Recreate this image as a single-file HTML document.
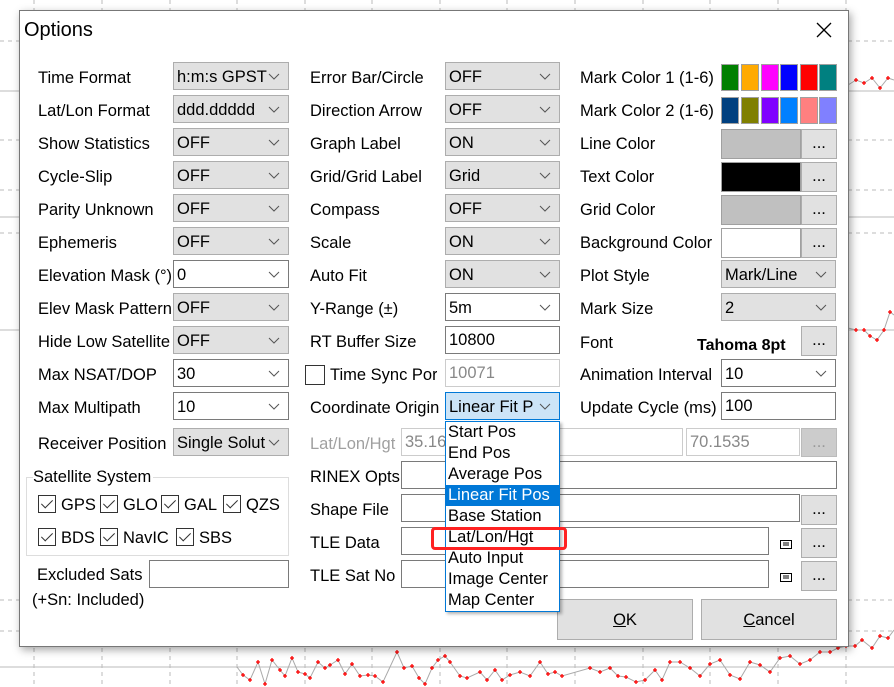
<!DOCTYPE html>
<html><head><meta charset="utf-8"><style>
*{box-sizing:border-box;margin:0;padding:0}
body{width:894px;height:687px;overflow:hidden;background:#fff;font-family:"Liberation Sans",sans-serif;font-size:16.5px;color:#000;position:relative}
.a{position:absolute}
.bg{z-index:0}
.dlg{position:absolute;z-index:1;left:19px;top:10px;width:830px;height:637px;background:#fff;border:1px solid #777;box-shadow:2px 3px 8px rgba(0,0,0,.35)}
#c{z-index:2}
.l{position:absolute;white-space:nowrap;line-height:20px}
.cb{position:absolute;height:28px;border:1px solid #adadad;background:#e1e1e1;padding-left:3px;line-height:28px;white-space:nowrap;overflow:hidden}
.cb.w{background:#fff;border-color:#7a7a7a}
.cb .ar{position:absolute;right:8px;top:10px;width:12px;height:7px}
.ed{position:absolute;height:28px;border:1px solid #7a7a7a;background:#fff;padding-left:3px;line-height:26px;white-space:nowrap;overflow:hidden}
.btn{position:absolute;border:1px solid #adadad;background:#e1e1e1;text-align:center;line-height:26px}
.sw{position:absolute;top:0;width:18px;height:27px;border:1px solid #a0a0a0}
.chk{display:inline-block;width:18px;height:18px;border:1px solid #333;vertical-align:-3px;margin-right:5px;position:relative}
.chk:after{content:"";position:absolute;left:5px;top:1px;width:5px;height:10px;border-right:1.3px solid #333;border-bottom:1.3px solid #333;transform:rotate(45deg)}
.chk.n:after{display:none}
.dd{position:absolute;left:445px;top:421px;width:115px;height:191px;border:1px solid #0078d7;background:#fff;box-shadow:2px 2px 3px rgba(0,0,0,.3)}
.dd div{height:21px;line-height:21px;padding-left:2px}
</style></head><body>
<svg class="a bg" style="left:0;top:0" width="894" height="687">
<defs><marker id="m" viewBox="0 0 4 4" refX="2" refY="2" markerWidth="4" markerHeight="4" markerUnits="userSpaceOnUse"><path d="M0 2H4M2 0V4" stroke="red" stroke-width="1.3"/></marker></defs>
<g stroke="#bbb" stroke-dasharray="4,4" stroke-width="1">
<line x1="0" y1="41" x2="894" y2="41"/><line x1="0" y1="140" x2="894" y2="140"/><line x1="0" y1="190" x2="894" y2="190"/><line x1="0" y1="233" x2="894" y2="233"/>
<line x1="0" y1="600" x2="894" y2="600"/><line x1="0" y1="631" x2="894" y2="631"/>
<line x1="34" y1="0" x2="34" y2="687"/><line x1="102" y1="0" x2="102" y2="687"/><line x1="170" y1="0" x2="170" y2="687"/><line x1="237" y1="0" x2="237" y2="687"/><line x1="305" y1="0" x2="305" y2="687"/><line x1="372" y1="0" x2="372" y2="687"/><line x1="440" y1="0" x2="440" y2="687"/><line x1="507" y1="0" x2="507" y2="687"/><line x1="575" y1="0" x2="575" y2="687"/><line x1="643" y1="0" x2="643" y2="687"/><line x1="710" y1="0" x2="710" y2="687"/><line x1="778" y1="0" x2="778" y2="687"/><line x1="846" y1="0" x2="846" y2="687"/>
</g>
<g stroke="#bbb"><line x1="0" y1="91" x2="894" y2="91"/><line x1="0" y1="217" x2="894" y2="217"/><line x1="0" y1="330" x2="894" y2="330"/><line x1="0" y1="667" x2="894" y2="667"/></g>
<polyline fill="none" stroke="#aaa" marker-mid="url(#m)" points="237,667 243,675 250,680 258,662 265,684 272,660 280,670 285,676 292,658 298,672 305,674 310,678 318,662 325,668 330,665 338,660 345,674 352,664 360,676 368,675 375,676 383,682 397,652 404,668 412,666 419,678 425,684 432,668 438,660 445,656 450,662 460,676 467,678 480,672 487,680 495,670 502,680 510,675 520,672 530,676 540,662 548,674 555,672 562,676 590,668 600,672 610,668 618,676 626,677 636,682 645,680 655,670 662,680 670,662 680,662 690,668 700,676 710,664 720,660 730,675 740,679 750,662 760,665 770,672 780,658 790,656 800,664 810,660 820,652 830,652 838,648 846,646 855,646 862,640 872,648 880,636 888,638 894,630"/>
<polyline fill="none" stroke="#aaa" marker-mid="url(#m)" points="848,85 856,80 864,83 872,78 880,88 888,78 894,80"/>
<polyline fill="none" stroke="#aaa" marker-mid="url(#m)" points="848,328 856,330 864,330 870,336 877,340 884,330 890,312 894,315"/>
</svg>
<div class="dlg">
<div class="l" style="left:4px;top:8px;font-size:20px;line-height:22px">Options</div>
<svg class="a" style="left:796px;top:11px" width="16" height="16"><path d="M1 1L15 15M15 1L1 15" stroke="#000" stroke-width="1.3"/></svg>
</div>
<div id="c" class="a" style="left:0;top:0;width:894px;height:687px">
<div class="l" style="left:38px;top:68px">Time Format</div>
<div class="l" style="left:38px;top:101px">Lat/Lon Format</div>
<div class="l" style="left:38px;top:134px">Show Statistics</div>
<div class="l" style="left:38px;top:167px">Cycle-Slip</div>
<div class="l" style="left:38px;top:200px">Parity Unknown</div>
<div class="l" style="left:38px;top:233px">Ephemeris</div>
<div class="l" style="left:38px;top:266px">Elevation Mask (°)</div>
<div class="l" style="left:38px;top:299px;width:135px;overflow:hidden">Elev Mask Pattern</div>
<div class="l" style="left:38px;top:332px;width:135px;overflow:hidden">Hide Low Satellite</div>
<div class="l" style="left:38px;top:365px">Max NSAT/DOP</div>
<div class="l" style="left:38px;top:398px">Max Multipath</div>
<div class="l" style="left:38px;top:434px">Receiver Position</div>

<div class="cb" style="left:173px;top:62px;width:116px">h:m:s GPST<svg class="ar" viewBox="0 0 12 7"><path d="M1 1L6 6L11 1" fill="none" stroke="#555"/></svg></div>
<div class="cb" style="left:173px;top:95px;width:116px">ddd.ddddd<svg class="ar" viewBox="0 0 12 7"><path d="M1 1L6 6L11 1" fill="none" stroke="#555"/></svg></div>
<div class="cb" style="left:173px;top:128px;width:116px">OFF<svg class="ar" viewBox="0 0 12 7"><path d="M1 1L6 6L11 1" fill="none" stroke="#555"/></svg></div>
<div class="cb" style="left:173px;top:161px;width:116px">OFF<svg class="ar" viewBox="0 0 12 7"><path d="M1 1L6 6L11 1" fill="none" stroke="#555"/></svg></div>
<div class="cb" style="left:173px;top:194px;width:116px">OFF<svg class="ar" viewBox="0 0 12 7"><path d="M1 1L6 6L11 1" fill="none" stroke="#555"/></svg></div>
<div class="cb" style="left:173px;top:227px;width:116px">OFF<svg class="ar" viewBox="0 0 12 7"><path d="M1 1L6 6L11 1" fill="none" stroke="#555"/></svg></div>
<div class="cb w" style="left:173px;top:260px;width:116px">0<svg class="ar" viewBox="0 0 12 7"><path d="M1 1L6 6L11 1" fill="none" stroke="#555"/></svg></div>
<div class="cb" style="left:173px;top:293px;width:116px">OFF<svg class="ar" viewBox="0 0 12 7"><path d="M1 1L6 6L11 1" fill="none" stroke="#555"/></svg></div>
<div class="cb" style="left:173px;top:326px;width:116px">OFF<svg class="ar" viewBox="0 0 12 7"><path d="M1 1L6 6L11 1" fill="none" stroke="#555"/></svg></div>
<div class="cb w" style="left:173px;top:359px;width:116px">30<svg class="ar" viewBox="0 0 12 7"><path d="M1 1L6 6L11 1" fill="none" stroke="#555"/></svg></div>
<div class="cb w" style="left:173px;top:392px;width:116px">10<svg class="ar" viewBox="0 0 12 7"><path d="M1 1L6 6L11 1" fill="none" stroke="#555"/></svg></div>
<div class="cb" style="left:173px;top:428px;width:116px">Single Solut<svg class="ar" viewBox="0 0 12 7"><path d="M1 1L6 6L11 1" fill="none" stroke="#555"/></svg></div>

<div class="a" style="left:26px;top:477px;width:263px;height:79px;border:1px solid #ddd"></div>
<div class="l" style="left:33px;top:467px;background:#fff;padding-right:2px">Satellite System</div>
<div class="l" style="left:38px;top:495px"><span class="chk"></span>GPS</div>
<div class="l" style="left:100px;top:495px"><span class="chk"></span>GLO</div>
<div class="l" style="left:161px;top:495px"><span class="chk"></span>GAL</div>
<div class="l" style="left:223px;top:495px"><span class="chk"></span>QZS</div>
<div class="l" style="left:38px;top:528px"><span class="chk"></span>BDS</div>
<div class="l" style="left:100px;top:528px"><span class="chk"></span>NavIC</div>
<div class="l" style="left:176px;top:528px"><span class="chk"></span>SBS</div>
<div class="l" style="left:37px;top:565px">Excluded Sats</div>
<div class="ed" style="left:149px;top:560px;width:140px"></div>
<div class="l" style="left:32px;top:590px">(+Sn: Included)</div>

<div class="l" style="left:310px;top:68px">Error Bar/Circle</div>
<div class="l" style="left:310px;top:101px">Direction Arrow</div>
<div class="l" style="left:310px;top:134px">Graph Label</div>
<div class="l" style="left:310px;top:167px">Grid/Grid Label</div>
<div class="l" style="left:310px;top:200px">Compass</div>
<div class="l" style="left:310px;top:233px">Scale</div>
<div class="l" style="left:310px;top:266px">Auto Fit</div>
<div class="l" style="left:310px;top:299px">Y-Range (±)</div>
<div class="l" style="left:310px;top:332px">RT Buffer Size</div>
<div class="l" style="left:305px;top:365px"><span class="chk n" style="width:20px;height:20px"></span></div>
<div class="l" style="left:330px;top:365px;width:107px;overflow:hidden">Time Sync Port</div>
<div class="l" style="left:310px;top:398px">Coordinate Origin</div>
<div class="l" style="left:310px;top:434px;color:#a0a0a0;width:90px;overflow:hidden">Lat/Lon/Hgt</div>
<div class="l" style="left:310px;top:467px">RINEX Opts</div>
<div class="l" style="left:310px;top:500px">Shape File</div>
<div class="l" style="left:310px;top:533px">TLE Data</div>
<div class="l" style="left:310px;top:566px">TLE Sat No</div>

<div class="cb" style="left:445px;top:62px;width:115px">OFF<svg class="ar" viewBox="0 0 12 7"><path d="M1 1L6 6L11 1" fill="none" stroke="#555"/></svg></div>
<div class="cb" style="left:445px;top:95px;width:115px">OFF<svg class="ar" viewBox="0 0 12 7"><path d="M1 1L6 6L11 1" fill="none" stroke="#555"/></svg></div>
<div class="cb" style="left:445px;top:128px;width:115px">ON<svg class="ar" viewBox="0 0 12 7"><path d="M1 1L6 6L11 1" fill="none" stroke="#555"/></svg></div>
<div class="cb" style="left:445px;top:161px;width:115px">Grid<svg class="ar" viewBox="0 0 12 7"><path d="M1 1L6 6L11 1" fill="none" stroke="#555"/></svg></div>
<div class="cb" style="left:445px;top:194px;width:115px">OFF<svg class="ar" viewBox="0 0 12 7"><path d="M1 1L6 6L11 1" fill="none" stroke="#555"/></svg></div>
<div class="cb" style="left:445px;top:227px;width:115px">ON<svg class="ar" viewBox="0 0 12 7"><path d="M1 1L6 6L11 1" fill="none" stroke="#555"/></svg></div>
<div class="cb" style="left:445px;top:260px;width:115px">ON<svg class="ar" viewBox="0 0 12 7"><path d="M1 1L6 6L11 1" fill="none" stroke="#555"/></svg></div>
<div class="cb w" style="left:445px;top:293px;width:115px">5m<svg class="ar" viewBox="0 0 12 7"><path d="M1 1L6 6L11 1" fill="none" stroke="#555"/></svg></div>
<div class="ed" style="left:445px;top:326px;width:115px">10800</div>
<div class="ed" style="left:445px;top:359px;width:115px;border-color:#ccc;color:#888">10071</div>
<div class="cb" style="left:445px;top:392px;width:115px;background:#cce4f7;border-color:#0078d7">Linear Fit P<svg class="ar" viewBox="0 0 12 7"><path d="M1 1L6 6L11 1" fill="none" stroke="#555"/></svg></div>

<div class="ed" style="left:401px;top:428px;width:282px;border-color:#ccc;color:#888">35.16</div>
<div class="ed" style="left:686px;top:428px;width:114px;border-color:#ccc;color:#888">70.1535</div>
<div class="btn" style="left:801px;top:428px;width:36px;height:29px;background:#ccc;border-color:#bbb;color:#999">...</div>
<div class="ed" style="left:401px;top:461px;width:436px"></div>
<div class="ed" style="left:401px;top:494px;width:399px"></div>
<div class="btn" style="left:801px;top:495px;width:36px;height:30px">...</div>
<div class="ed" style="left:401px;top:527px;width:368px"></div>
<svg class="a" style="left:780px;top:540px" width="12" height="9"><rect x=".5" y=".5" width="11" height="8" fill="none" stroke="#000"/><path d="M3 3H9M3 5H9" stroke="#000"/></svg>
<div class="btn" style="left:801px;top:528px;width:36px;height:30px">...</div>
<div class="ed" style="left:401px;top:560px;width:368px"></div>
<svg class="a" style="left:780px;top:573px" width="12" height="9"><rect x=".5" y=".5" width="11" height="8" fill="none" stroke="#000"/><path d="M3 3H9M3 5H9" stroke="#000"/></svg>
<div class="btn" style="left:801px;top:561px;width:36px;height:30px">...</div>

<div class="l" style="left:580px;top:68px">Mark Color 1 (1-6)</div>
<div class="l" style="left:580px;top:101px">Mark Color 2 (1-6)</div>
<div class="l" style="left:580px;top:134px">Line Color</div>
<div class="l" style="left:580px;top:167px">Text Color</div>
<div class="l" style="left:580px;top:200px">Grid Color</div>
<div class="l" style="left:580px;top:233px">Background Color</div>
<div class="l" style="left:580px;top:266px">Plot Style</div>
<div class="l" style="left:580px;top:299px">Mark Size</div>
<div class="l" style="left:580px;top:333px">Font</div>
<div class="l" style="left:697px;top:336px;font-weight:bold;font-size:16px">Tahoma 8pt</div>
<div class="l" style="left:580px;top:365px;width:140px;overflow:hidden">Animation Interval</div>
<div class="l" style="left:580px;top:398px;width:140px;overflow:hidden">Update Cycle (ms)</div>

<div class="a" style="left:721px;top:64px;width:116px;height:27px">
<div class="sw" style="left:0;background:#008000"></div><div class="sw" style="left:20px;background:#ffaa00"></div><div class="sw" style="left:40px;background:#ff00ff"></div><div class="sw" style="left:59px;background:#0000ff"></div><div class="sw" style="left:79px;background:#ff0000"></div><div class="sw" style="left:98px;background:#008080"></div></div>
<div class="a" style="left:721px;top:97px;width:116px;height:27px">
<div class="sw" style="left:0;background:#004080"></div><div class="sw" style="left:20px;background:#808000"></div><div class="sw" style="left:40px;background:#8000ff"></div><div class="sw" style="left:59px;background:#0080ff"></div><div class="sw" style="left:79px;background:#ff8080"></div><div class="sw" style="left:98px;background:#8080ff"></div></div>
<div class="a" style="left:721px;top:129px;width:80px;height:30px;background:#c0c0c0;border:1px solid #a0a0a0"></div>
<div class="btn" style="left:801px;top:129px;width:36px;height:30px">...</div>
<div class="a" style="left:721px;top:162px;width:80px;height:30px;background:#000;border:1px solid #a0a0a0"></div>
<div class="btn" style="left:801px;top:162px;width:36px;height:30px">...</div>
<div class="a" style="left:721px;top:195px;width:80px;height:30px;background:#c0c0c0;border:1px solid #a0a0a0"></div>
<div class="btn" style="left:801px;top:195px;width:36px;height:30px">...</div>
<div class="a" style="left:721px;top:228px;width:80px;height:30px;background:#fff;border:1px solid #a0a0a0"></div>
<div class="btn" style="left:801px;top:228px;width:36px;height:30px">...</div>
<div class="cb" style="left:721px;top:260px;width:115px">Mark/Line<svg class="ar" viewBox="0 0 12 7"><path d="M1 1L6 6L11 1" fill="none" stroke="#555"/></svg></div>
<div class="cb" style="left:721px;top:293px;width:115px">2<svg class="ar" viewBox="0 0 12 7"><path d="M1 1L6 6L11 1" fill="none" stroke="#555"/></svg></div>
<div class="btn" style="left:801px;top:326px;width:36px;height:30px">...</div>
<div class="cb w" style="left:721px;top:359px;width:115px">10<svg class="ar" viewBox="0 0 12 7"><path d="M1 1L6 6L11 1" fill="none" stroke="#555"/></svg></div>
<div class="ed" style="left:721px;top:392px;width:115px">100</div>

<div class="btn" style="left:557px;top:599px;width:136px;height:41px;line-height:41px"><u>O</u>K</div>
<div class="btn" style="left:701px;top:599px;width:136px;height:41px;line-height:41px"><u>C</u>ancel</div>

<div class="dd">
<div>Start Pos</div><div>End Pos</div><div>Average Pos</div><div style="background:#0078d7;color:#fff">Linear Fit Pos</div><div>Base Station</div><div>Lat/Lon/Hgt</div><div>Auto Input</div><div>Image Center</div><div>Map Center</div>
</div>
<div class="a" style="left:431px;top:527px;width:136px;height:23px;border:3px solid #f22;border-radius:4px"></div>
</div>
</body></html>
